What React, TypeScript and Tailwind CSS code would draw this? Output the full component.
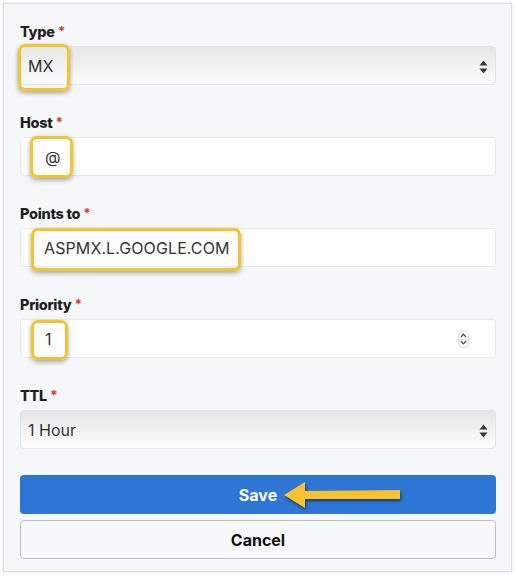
import React from "react";

const font = { fontFamily: "Inter, 'Noto Sans', sans-serif" };

function Label({ text }: { text: string }) {
  return (
    <div className="h-5 leading-5 mb-1 text-[14.5px] font-extrabold text-[#1f1f1f] tracking-[-0.3px]">
      {text}
      <span className="text-[#e0392b] ml-[3px] text-[13px] relative top-[-1px]">*</span>
    </div>
  );
}

function SelectArrows() {
  return (
    <svg width="9" height="14" viewBox="0 0 9 14" className="absolute right-[7px] top-[13px]">
      <path d="M4.5 0.5 L8.5 5.5 L0.5 5.5 Z" fill="#3a3a3a" />
      <path d="M4.5 13.5 L8.5 8.5 L0.5 8.5 Z" fill="#3a3a3a" />
    </svg>
  );
}

function Highlight({ cls }: { cls: string }) {
  return (
    <div
      className={
        "absolute border-[3px] border-[#f6c330] rounded-[7px] shadow-[0_2px_5px_rgba(0,0,0,0.35)] pointer-events-none " +
        cls
      }
    />
  );
}

export default function App() {
  return (
    <div className="w-[517px] h-[576px] bg-white pt-[3px] pl-[3px]" style={font}>
      <div className="w-[509px] h-[569px] bg-[#f6f7f9] border border-[#dcdde0] shadow-[0_0_2px_rgba(0,0,0,0.15)] pt-[18px] px-[16px] flex flex-col">
        {/* Type */}
        <div className="flex flex-col mb-[28px]">
          <Label text="Type" />
          <div className="relative h-[39px] w-[476px] rounded-[4px] border border-[#e3e4e6] bg-gradient-to-b from-[#e6e6e6] to-[#fdfdfd] flex items-center">
            <span className="pl-[7px] text-[16px] text-[#333]">MX</span>
            <SelectArrows />
            <Highlight cls="left-[-3px] top-[-3px] w-[52px] h-[47px]" />
          </div>
        </div>
        {/* Host */}
        <div className="flex flex-col mb-[28px]">
          <Label text="Host" />
          <div className="relative h-[39px] w-[476px] rounded-[4px] border border-[#e6e7ea] bg-white flex items-center">
            <span className="pl-[24px] text-[16px] text-[#333]">@</span>
            <Highlight cls="left-[9px] top-[-2px] w-[43px] h-[42px]" />
          </div>
        </div>
        {/* Points to */}
        <div className="flex flex-col mb-[28px]">
          <Label text="Points to" />
          <div className="relative h-[39px] w-[476px] rounded-[4px] border border-[#e6e7ea] bg-white flex items-center">
            <span className="pl-[23px] text-[16px] text-[#333] tracking-[0.1px]">ASPMX.L.GOOGLE.COM</span>
            <Highlight cls="left-[10px] top-[-1px] w-[210px] h-[43px]" />
          </div>
        </div>
        {/* Priority */}
        <div className="flex flex-col mb-[28px]">
          <Label text="Priority" />
          <div className="relative h-[39px] w-[476px] rounded-[4px] border border-[#e6e7ea] bg-white flex items-center">
            <span className="pl-[24px] text-[16px] text-[#333]">1</span>
            <div className="absolute right-[26px] top-[10px] w-[11px] h-[18px] rounded-[6px] border border-[#d6d6d6] bg-white flex flex-col items-center justify-between py-[2px]">
              <svg width="7" height="5" viewBox="0 0 7 5">
                <path d="M1 4 L3.5 1.2 L6 4" fill="none" stroke="#444" strokeWidth="1.2" />
              </svg>
              <div className="w-[9px] h-px bg-[#d6d6d6]" />
              <svg width="7" height="5" viewBox="0 0 7 5">
                <path d="M1 1 L3.5 3.8 L6 1" fill="none" stroke="#444" strokeWidth="1.2" />
              </svg>
            </div>
            <Highlight cls="left-[10px] top-[0px] w-[37px] h-[40px]" />
          </div>
        </div>
        {/* TTL */}
        <div className="flex flex-col mb-[26px]">
          <Label text="TTL" />
          <div className="relative h-[39px] w-[476px] rounded-[4px] border border-[#e3e4e6] bg-gradient-to-b from-[#e6e6e6] to-[#fdfdfd] flex items-center">
            <span className="pl-[7px] text-[16px] text-[#333]">1 Hour</span>
            <SelectArrows />
          </div>
        </div>
        {/* Save */}
        <div className="relative h-[39px] w-[476px] rounded-[4px] bg-[#2e76d3] flex items-center justify-center">
          <span className="text-white font-bold text-[16px]">Save</span>
          <svg
            width="124"
            height="32"
            viewBox="0 0 124 32"
            className="absolute left-[262px] top-[4px]"
            style={{ filter: "drop-shadow(1px 2px 1.5px rgba(0,0,0,0.5))" }}
          >
            <path d="M2 16 L23 3 L23 12 L118 11 L118 20 L23 20 L23 29 Z" fill="#f7c22b" />
          </svg>
        </div>
        {/* Cancel */}
        <div className="mt-[6px] h-[39px] w-[476px] rounded-[4px] bg-[#f8f9fa] border border-[#b9c0c8] flex items-center justify-center">
          <span className="text-[#111] font-bold text-[16px]">Cancel</span>
        </div>
      </div>
    </div>
  );
}
